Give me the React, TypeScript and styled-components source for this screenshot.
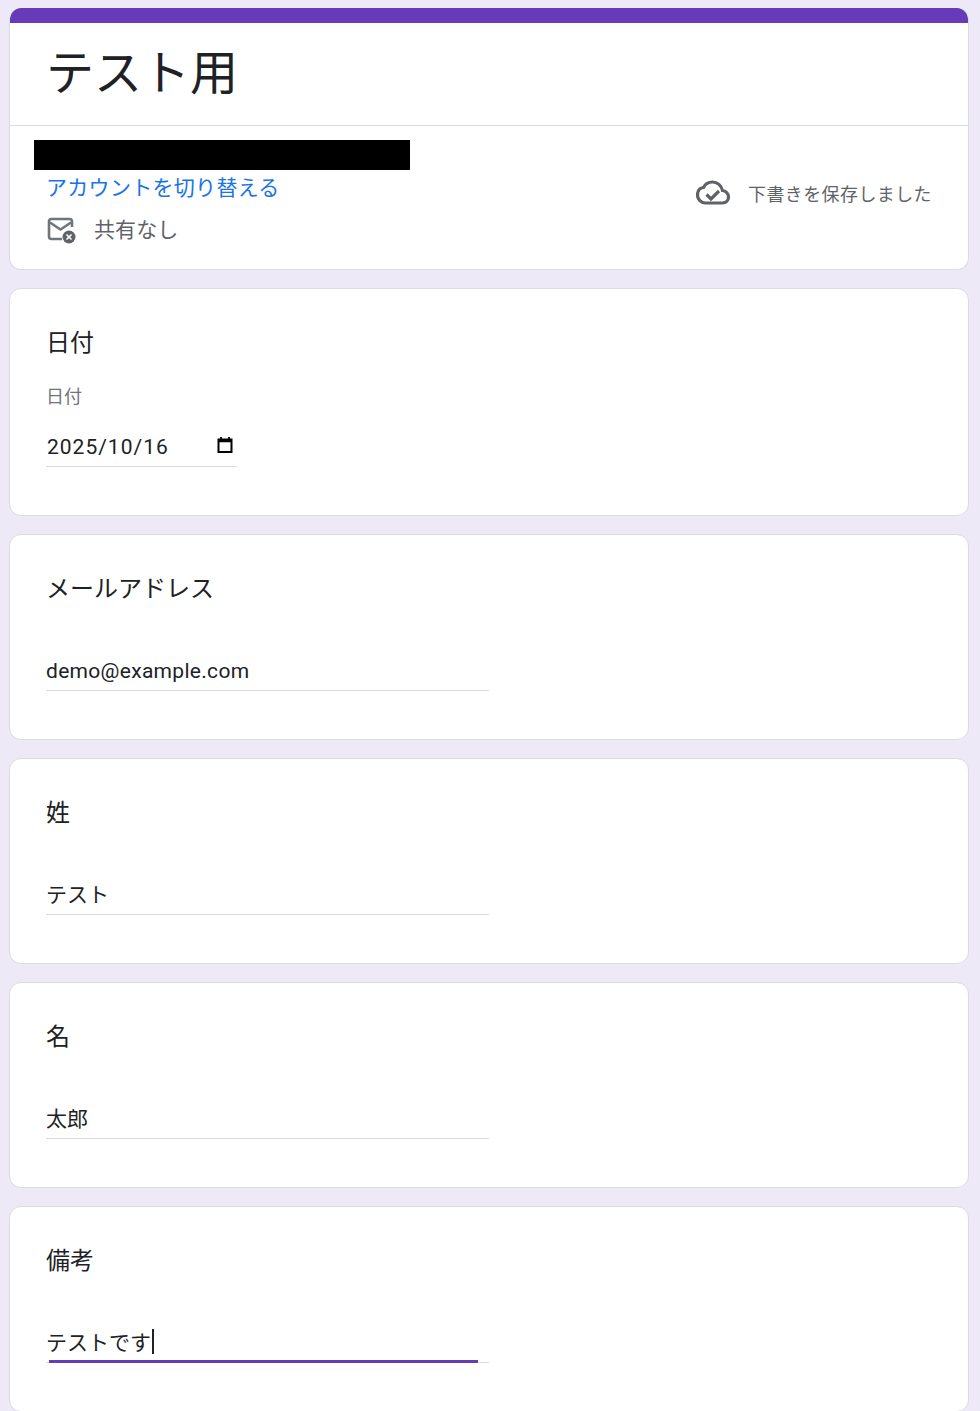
import styled, { createGlobalStyle } from "styled-components";

const GlobalStyle = createGlobalStyle`
  html, body {
    margin: 0;
    padding: 0;
    height: 1411px;
    overflow: hidden;
    background: #ede9f7;
  }
  * {
    box-sizing: border-box;
  }
`;

const Page = styled.div`
  display: flex;
  flex-direction: column;
  gap: 18px;
  width: 960px;
  margin-left: 9px;
  padding-top: 8px;
  font-family: Roboto, "Noto Sans CJK JP", sans-serif;
  color: #202124;
`;

const Card = styled.section<{ $height: number }>`
  flex: none;
  height: ${(p) => p.$height}px;
  background: #fff;
  border: 1px solid #dadce0;
  border-radius: 12px;
`;

const HeaderCard = styled.section`
  flex: none;
  height: 262px;
  background: #fff;
  border: 1px solid #dadce0;
  border-top: 0;
  border-radius: 12px;
  overflow: hidden;
`;

const Band = styled.div`
  height: 15px;
  margin: 0 -1px;
  background: #673ab7;
`;

const TitleRow = styled.div`
  height: 103px;
  padding: 21px 0 0 36px;
  border-bottom: 1px solid #dadce0;
`;

const Title = styled.h1`
  margin: 0;
  font-size: 48px;
  line-height: 60px;
  font-weight: 400;
`;

const AccountRow = styled.div`
  display: flex;
  justify-content: space-between;
`;

const AccountColumn = styled.div`
  padding: 14px 0 0 24px;
`;

const Redacted = styled.div`
  width: 376px;
  height: 30px;
  background: #000;
`;

const SwitchLink = styled.a`
  display: block;
  margin: 3px 0 0 12px;
  font-size: 21px;
  line-height: 30px;
  letter-spacing: 0.3px;
  color: #1a73e8;
`;

const ShareRow = styled.div`
  display: flex;
  align-items: center;
  gap: 18px;
  margin: 10px 0 0 13px;
  font-size: 21px;
  line-height: 34px;
  letter-spacing: 0.1px;
  color: #5f6368;
`;

const SavedNote = styled.div`
  display: flex;
  align-items: center;
  gap: 18px;
  height: 36px;
  margin: 49px 36px 0 0;
  font-size: 18px;
  letter-spacing: 0.4px;
  color: #5f6368;
`;

const QuestionBody = styled.div`
  padding: 37px 0 0 36px;
`;

const QuestionLabel = styled.div`
  font-size: 24px;
  line-height: 34px;
`;

const DateCaption = styled.div`
  margin-top: 25px;
  font-size: 18px;
  line-height: 24px;
  color: #70757a;
`;

const DateField = styled.div`
  display: flex;
  align-items: center;
  justify-content: space-between;
  width: 191px;
  height: 39px;
  margin-top: 19px;
  padding: 0 3px 0 1px;
  font-size: 21px;
  letter-spacing: 1px;
  border-bottom: 1px solid #dadce0;
`;

const CalendarGlyph = styled.svg`
  margin-bottom: 4px;
`;

const TextField = styled.div<{ $focused?: boolean; $latin?: boolean }>`
  position: relative;
  display: flex;
  align-items: center;
  width: 443px;
  height: 39px;
  margin-top: 46px;
  padding-bottom: ${(p) => (p.$latin ? "0" : "4px")};
  font-size: 21px;
  letter-spacing: ${(p) => (p.$latin ? "0.3px" : "0")};
  border-bottom: 1px solid #dadce0;
  &::after {
    content: "";
    display: ${(p) => (p.$focused ? "block" : "none")};
    position: absolute;
    left: 3px;
    bottom: -1px;
    width: 429px;
    height: 3px;
    background: #673ab7;
  }
`;

const Caret = styled.span`
  width: 2px;
  height: 25px;
  margin-left: 1px;
  background: #202124;
`;

function App() {
  return (
    <Page>
      <GlobalStyle />
      <HeaderCard>
        <Band />
        <TitleRow>
          <Title>テスト用</Title>
        </TitleRow>
        <AccountRow>
          <AccountColumn>
            <Redacted />
            <SwitchLink>アカウントを切り替える</SwitchLink>
            <ShareRow>
              <svg width="29" height="27" viewBox="0 0 29 27" fill="none">
                <path d="M25 10V4.500A2.500 2.500 0 0 0 22.500 2h-18A2.500 2.500 0 0 0 2 4.500v15A2.500 2.500 0 0 0 4.500 22H15" stroke="#70757a" strokeWidth="2.600" />
                <path d="M3 5.500l10.500 7 10.500-7" stroke="#70757a" strokeWidth="2.600" />
                <circle cx="22" cy="20" r="6.500" fill="#5f6368" />
                <path d="M19.500 17.500l5 5m0-5l-5 5" stroke="#fff" strokeWidth="1.600" />
              </svg>
              共有なし
            </ShareRow>
          </AccountColumn>
          <SavedNote>
            <svg width="34" height="26" viewBox="0 0 34 26" fill="none">
              <path
                d="M26.500 10.500C25.500 5.500 21.300 2 16.500 2c-3.900 0-7.300 2.200-9 5.500C3.400 8 1.500 11.300 1.500 15c0 4.400 3.600 8 8 8h17c3.600 0 6-2.900 6-6.200 0-3.200-2.800-6-6-6.300z"
                stroke="#5f6368"
                strokeWidth="3.200"
              />
              <path d="M10.500 14.500l4.500 4.500 8-8" stroke="#5f6368" strokeWidth="3.200" />
            </svg>
            下書きを保存しました
          </SavedNote>
        </AccountRow>
      </HeaderCard>

      <Card $height={228}>
        <QuestionBody>
          <QuestionLabel>日付</QuestionLabel>
          <DateCaption>日付</DateCaption>
          <DateField>
            2025/10/16
            <CalendarGlyph width="18" height="18" viewBox="0 0 18 18" fill="none">
              <path d="M2.500 3.500h13v12.500h-13z" stroke="#000" strokeWidth="2" />
              <path d="M2 5h14" stroke="#000" strokeWidth="2.500" />
              <path d="M5 1v3M13 1v3" stroke="#000" strokeWidth="1.800" />
            </CalendarGlyph>
          </DateField>
        </QuestionBody>
      </Card>

      <Card $height={206}>
        <QuestionBody>
          <QuestionLabel>メールアドレス</QuestionLabel>
          <TextField $latin>demo@example.com</TextField>
        </QuestionBody>
      </Card>

      <Card $height={206}>
        <QuestionBody>
          <QuestionLabel>姓</QuestionLabel>
          <TextField>テスト</TextField>
        </QuestionBody>
      </Card>

      <Card $height={206}>
        <QuestionBody>
          <QuestionLabel>名</QuestionLabel>
          <TextField>太郎</TextField>
        </QuestionBody>
      </Card>

      <Card $height={206}>
        <QuestionBody>
          <QuestionLabel>備考</QuestionLabel>
          <TextField $focused>
            テストです
            <Caret />
          </TextField>
        </QuestionBody>
      </Card>
    </Page>
  );
}

export default App;
